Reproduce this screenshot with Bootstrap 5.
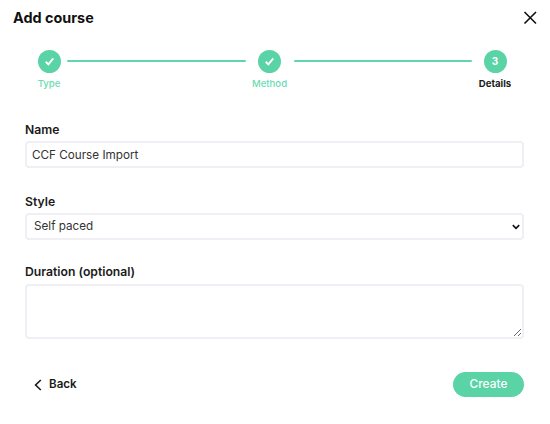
<!DOCTYPE html>
<html lang="en">
<head>
<meta charset="utf-8">
<title>Add course</title>
<link rel="stylesheet" href="https://cdn.jsdelivr.net/npm/bootstrap@5.3.0/dist/css/bootstrap.min.css">
<style>
html,body{height:100%;}
body{font-family:"Inter","Liberation Sans",sans-serif;color:#111;background:#fff;overflow:hidden;}
.dlg-head{padding:9px 13px 0 13px;height:30px;}
.dlg-title{font-size:14.4px;font-weight:700;line-height:18px;margin:0;}
.dlg-close{border:0;background:none;padding:0;width:16px;height:16px;line-height:0;}
.stepper{padding:20px 32px 0 31px;height:92px;}
.stp{display:flex;flex-direction:column;align-items:center;flex:none;}
.stp-a{width:36px;}.stp-b{width:48px;}.stp-c{width:46px;}
.stp-dot{width:23px;height:23px;border-radius:50%;background:#5ad3a6;color:#fff;font-size:10px;font-weight:700;display:flex;align-items:center;justify-content:center;}
.stp-txt{font-size:9.6px;font-weight:500;line-height:12px;margin-top:5px;color:#6bdcb2;white-space:nowrap;}
.stp-now{color:#1a1a1a;font-weight:700;}
.stp-line{flex:1;height:2.5px;background:#62d6ab;margin-top:9.5px;border-radius:1px;}
.dlg-form{padding:0 26px 0 25px;}
.fld{margin-bottom:26px;}
.fld-lbl{display:block;font-size:12.2px;font-weight:600;line-height:16px;margin-bottom:3px;color:#1a1a1a;}
.fld .form-control,.fld .form-select{font-size:11.7px;border:2px solid #f0eff6;border-radius:4px;color:#333;height:27px;min-height:0;padding:0 5px;line-height:23px;box-shadow:none;}
.fld .form-select{padding-left:7px;background-image:url("data:image/svg+xml,%3csvg xmlns='http://www.w3.org/2000/svg' viewBox='0 0 10 7'%3e%3cpath d='M1 1.2 5 5.2 9 1.2' fill='none' stroke='%23111' stroke-width='2'/%3e%3c/svg%3e");background-size:8px 6px;background-position:right 2px center;}
.fld-tight{margin-bottom:24px;}
.fld-last .fld-lbl{margin-bottom:4px;}
.fld textarea.form-control{height:55px;}
.dlg-foot{padding:0 26px 0 25px;margin-top:33px;}
.btn-bk{font-size:11.6px;font-weight:600;color:#1a1a1a;padding:0 0 0 9px;border:0;background:none;display:flex;align-items:center;gap:7px;height:25px;}
.btn-mk{background:#5ad3a6;border:0;color:#fff;font-size:11.8px;font-weight:500;border-radius:13px;width:71px;height:25px;padding:0;letter-spacing:.1px;}
</style>
</head>
<body>
<div class="dlg-head d-flex justify-content-between align-items-start">
  <h1 class="dlg-title">Add course</h1>
  <button class="dlg-close" aria-label="Close" type="button"><svg width="16" height="16" viewBox="0 0 16 16"><path d="M3.5 3 15 14.5M15 3 3.5 14.5" stroke="#111" stroke-width="1.6" fill="none"/></svg></button>
</div>
<div class="stepper d-flex align-items-start">
  <div class="stp stp-a"><div class="stp-dot"><svg width="11" height="11" viewBox="0 0 10 10"><path d="M1.6 5.2 4 7.6 8.4 2.2" stroke="#fff" stroke-width="1.7" fill="none"/></svg></div><div class="stp-txt">Type</div></div>
  <div class="stp-line"></div>
  <div class="stp stp-b"><div class="stp-dot"><svg width="11" height="11" viewBox="0 0 10 10"><path d="M1.6 5.2 4 7.6 8.4 2.2" stroke="#fff" stroke-width="1.7" fill="none"/></svg></div><div class="stp-txt">Method</div></div>
  <div class="stp-line"></div>
  <div class="stp stp-c"><div class="stp-dot">3</div><div class="stp-txt stp-now">Details</div></div>
</div>
<form class="dlg-form">
  <div class="fld"><label class="fld-lbl" for="f1">Name</label><input id="f1" class="form-control" type="text" value="CCF Course Import"></div>
  <div class="fld fld-tight"><label class="fld-lbl" for="f2">Style</label><select id="f2" class="form-select"><option>Self paced</option></select></div>
  <div class="fld fld-last mb-0"><label class="fld-lbl" for="f3">Duration (optional)</label><textarea id="f3" class="form-control"></textarea></div>
</form>
<div class="dlg-foot d-flex justify-content-between align-items-center">
  <button class="btn-bk" type="button"><svg width="8" height="12" viewBox="0 0 8 12"><path d="M6.8 1 1.6 6l5.2 5" stroke="#1a1a1a" stroke-width="1.6" fill="none"/></svg>Back</button>
  <button class="btn-mk" type="button">Create</button>
</div>
<script src="https://cdn.jsdelivr.net/npm/bootstrap@5.3.0/dist/js/bootstrap.bundle.min.js"></script>
</body>
</html>
